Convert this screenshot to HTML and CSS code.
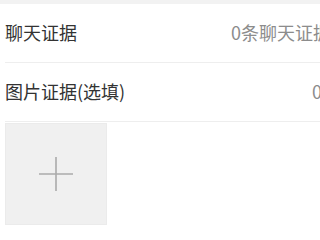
FILE: index.html
```html
<!DOCTYPE html>
<html lang="zh-CN">
<head>
    <meta charset="utf-8">
    <link rel="stylesheet" href="styles.css">
</head>
<body>
    <div class="page">
        <div class="top-gap"></div>
        <div class="form-row">
            <span class="row-label">聊天证据</span>
            <span class="row-value">0条聊天证据</span>
        </div>
        <div class="form-row">
            <span class="row-label">图片证据(选填)</span>
            <span class="row-value row-count">0/9</span>
        </div>
        <div class="upload-list">
            <div class="upload-btn">
                <svg width="36" height="36" viewBox="0 0 36 36">
                    <path d="M18 1v34M1 18h34" stroke="#ababab" stroke-width="1.6" fill="none"/>
                </svg>
            </div>
        </div>
    </div>
</body>
</html>
```

FILE: styles.css
```css
body {
    margin: 0;
    background-color: #fff;
    font-family: 'Noto Sans CJK SC', 'Noto Sans', sans-serif;
    overflow: hidden;
}

.page {
    width: 336px;
}

.top-gap {
    height: 4px;
    background-color: #f2f2f2;
}

.form-row {
    display: flex;
    justify-content: space-between;
    align-items: center;
    height: 56px;
    padding-bottom: 2px;
    margin-left: 5px;
    padding-right: 5px;
    border-bottom: 1px solid #eeeeee;
    font-size: 18px;
    white-space: nowrap;
}

.form-row:last-of-type {
    border-bottom: none;
}

.row-label {
    color: #333;
}

.row-value {
    color: #8c8c8c;
}

.row-count {
    margin-right: -8px;
}

.upload-list {
    display: flex;
    padding: 1px 5px 0;
}

.upload-btn {
    width: 100px;
    height: 100px;
    background-color: #f0f0f0;
    border: 1px solid #ebebeb;
    display: flex;
    justify-content: center;
    align-items: center;
}
```
